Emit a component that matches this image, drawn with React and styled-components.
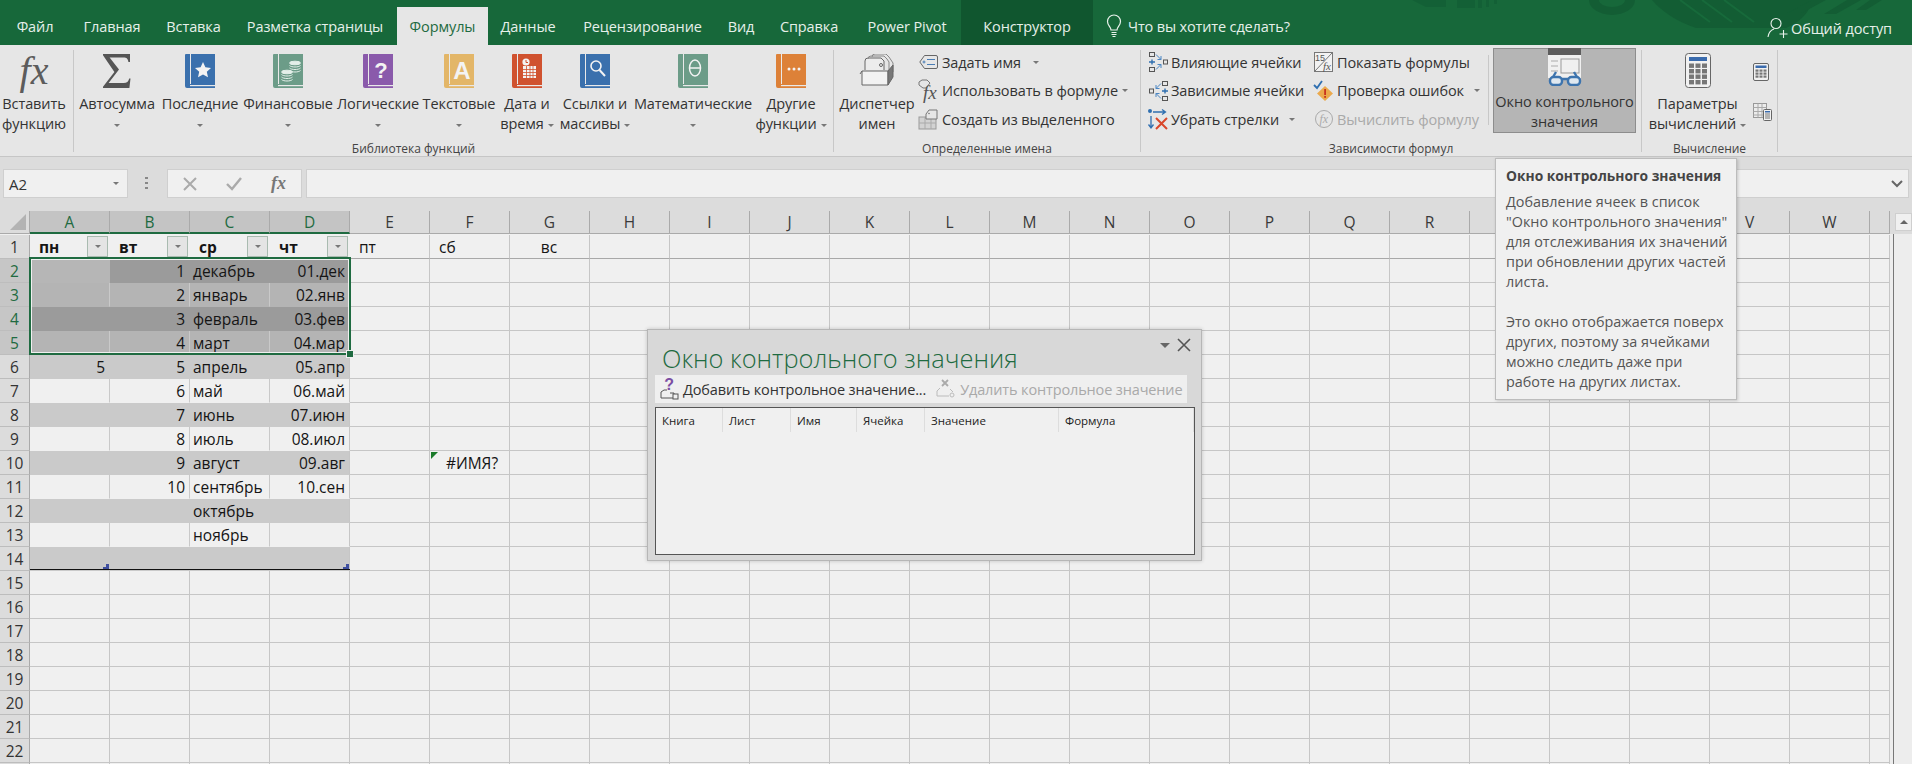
import styled, { createGlobalStyle } from "styled-components";

const GREEN = "#17683a";
const SEL_GREEN = "#1f6b41";
const FONT = `"Open Sans", "Noto Sans", sans-serif`;

const GlobalStyle = createGlobalStyle`
    html, body {
        margin: 0;
        padding: 0;
        overflow: hidden;
        background: #f0f0f0;
    }
    * { box-sizing: border-box; }
`;

const TABS = [
    { name: "Файл", width: 70 },
    { name: "Главная", width: 84 },
    { name: "Вставка", width: 79 },
    { name: "Разметка страницы", width: 164 },
    { name: "Формулы", width: 91, active: true },
    { name: "Данные", width: 80 },
    { name: "Рецензирование", width: 149 },
    { name: "Вид", width: 48 },
    { name: "Справка", width: 88 },
    { name: "Power Pivot", width: 108 },
    { name: "Конструктор", width: 132, dark: true },
];

const COLUMNS = "ABCDEFGHIJKLMNOPQRSTUVW".split("");
const UNDER_TOOLTIP = ["S", "T", "U"];

const TABLE_ROWS = [
    ["", "1", "декабрь", "01.дек"],
    ["", "2", "январь", "02.янв"],
    ["", "3", "февраль", "03.фев"],
    ["", "4", "март", "04.мар"],
    ["5", "5", "апрель", "05.апр"],
    ["", "6", "май", "06.май"],
    ["", "7", "июнь", "07.июн"],
    ["", "8", "июль", "08.июл"],
    ["", "9", "август", "09.авг"],
    ["", "10", "сентябрь", "10.сен"],
    ["", "", "октябрь", ""],
    ["", "", "ноябрь", ""],
    ["", "", "", ""],
];

const WATCH_COLUMNS = [
    { name: "Книга", width: 67 },
    { name: "Лист", width: 68 },
    { name: "Имя", width: 66 },
    { name: "Ячейка", width: 68 },
    { name: "Значение", width: 134 },
    { name: "Формула", width: 135 },
];

function toneOf(rowNo, colIdx) {
    if (rowNo === 2) return colIdx === 0 ? "#b6b6b6" : "#9b9b9b";
    if (rowNo === 3 || rowNo === 5) return "#b4b4b4";
    if (rowNo === 4) return "#9b9b9b";
    return rowNo % 2 === 0 ? "#cacaca" : "#f0f0f0";
}

/* ---- icons ---- */

function Book({ color, light, children }) {
    return (
        <svg width="30" height="34" viewBox="0 0 30 34">
            <path d="M1 0h29v31H6v1h24v2H2a2 2 0 0 1-2-2V1a1 1 0 0 1 1-1z" fill={color} />
            <rect x="5" y="0" width="1" height="30" fill={light || "#e9e9e9"} />
            <rect x="5" y="31" width="25" height="1.2" fill={light || "#e9e9e9"} />
            {children}
        </svg>
    );
}

const BookLetter = styled.text`
    font-family: "Liberation Sans", sans-serif;
    font-weight: 700;
    fill: #f3f3f3;
    text-anchor: middle;
`;

const Sigma = () => (
    <svg width="30" height="34" viewBox="0 0 30 34">
        <path d="M1 0h27v8h-1.6c-.5-3-1.6-4.4-5-4.4H7.6L17 15.6 6.6 29h15c3.400 0 4.800-1.600 5.600-4.600h1.300L27.400 34H1v-1.200L12.400 18 1 1.300z" fill="#555" />
    </svg>
);

const CoinStack = ({ x, y }) => (
    <g stroke="#e4efe9" strokeWidth="1" fill="none">
        <ellipse cx={x} cy={y} rx="5.500" ry="1.800" fill="#e4efe9" />
        <path d={`M${x - 5.5} ${y + 2.5}c2 2 9 2 11 0M${x - 5.5} ${y + 5}c2 2 9 2 11 0M${x - 5.5} ${y + 7.5}c2 2 9 2 11 0`} />
    </g>
);

const BulbIcon = () => (
    <svg width="16" height="24" viewBox="0 0 16 24" fill="none" stroke="#e9f2ec" strokeWidth="1.200">
        <path d="M5 16c0-3-3.500-4.500-3.500-8.500a6.500 6.500 0 0 1 13 0C14.500 11.500 11 13 11 16z" />
        <path d="M5.500 18.500h5M5.500 20.500h5M6.500 22.500h3" />
    </svg>
);

const ShareIcon = () => (
    <svg width="22" height="22" viewBox="0 0 22 22" fill="none" stroke="#e9f2ec" strokeWidth="1.100">
        <circle cx="9" cy="6.500" r="5" />
        <path d="M1 20c.6-4.500 3-7 6-8M16.500 13v8M12.500 17h8" />
    </svg>
);

const TagIcon = () => (
    <svg width="19" height="16" viewBox="0 0 19 16" fill="none" stroke="#666" strokeWidth="1">
        <path d="M5.500 1.500H17a1.500 1.500 0 0 1 1.500 1.500v10a1.500 1.500 0 0 1-1.500 1.500H5.500L.8 8z" />
        <circle cx="5" cy="8" r="1" stroke="#4a7db5" />
        <path d="M8 5.500h8M8 10.500h8" stroke="#4a7db5" />
    </svg>
);

const FxSvg = styled.text`
    font-family: "Liberation Serif", serif;
    font-style: italic;
    fill: #555;
`;

const UseFormulaIcon = () => (
    <svg width="21" height="24" viewBox="0 0 21 24">
        <path d="M1 3l3-2h5l3 3-4 5H5L1 6z" fill="none" stroke="#777" />
        <FxSvg x="5" y="20" fontSize="19">fx</FxSvg>
    </svg>
);

const CreateFromIcon = () => (
    <svg width="21" height="22" viewBox="0 0 21 22">
        <rect x="1" y="9" width="17" height="12" fill="#d2d2d2" stroke="#999" />
        <path d="M1 15h17M7 9v12M13 9v12" stroke="#aaa" />
        <path d="M8 6l3-4h8v9H8z" fill="#e6e6e6" stroke="#777" />
        <circle cx="11" cy="5.500" r=".8" fill="#777" />
    </svg>
);

const NameManagerIcon = () => (
    <svg width="36" height="34" viewBox="0 0 36 34" fill="none" stroke="#666">
        <path d="M6 16V7a3 3 0 0 1 3-3h13l3 3v9" fill="#ececec" />
        <path d="M9 5a3 3 0 0 1 3-3h13l3 3 2 3v9M13 3a3 3 0 0 1 3-3h11l3 3 2 3 2 3v9" stroke="#888" />
        <circle cx="22" cy="11" r="1.500" />
        <path d="M3 17h26v14H3z" fill="#f2f2f2" />
        <path d="M3 17l-2 3M29 17l5-6v12l-5 8z" fill="#777" stroke="#666" />
    </svg>
);

const TraceIcon = ({ flip }) => (
    <svg width="21" height="20" viewBox="0 0 21 20" fill="none" stroke="#555" style={flip ? { transform: "scaleX(-1)" } : undefined}>
        <rect x="1.500" y=".5" width="5" height="4" />
        <rect x="1.500" y="15.500" width="5" height="4" />
        <rect x="15.500" y="8" width="4" height="4" />
        <path d="M1 10h6M4 7.500v5" stroke="#2f6fb0" strokeWidth="1.400" />
        <path d="M8 2.500l5 5M13 4v3.500H9.500M8 17.500l5-5M13 16v-3.500H9.500" stroke="#4a86c4" />
    </svg>
);

const RemoveArrowsIcon = () => (
    <svg width="22" height="22" viewBox="0 0 22 22" fill="none">
        <circle cx="3" cy="3" r="2" fill="#2f6fb0" />
        <path d="M6 4h12M15 1.500L18.500 4 15 6.500M4 8v12M1.500 16.500L4 20l2.500-3.500" stroke="#2f6fb0" strokeWidth="1.300" />
        <path d="M9 10l11 11M20 10L9 21" stroke="#d9472b" strokeWidth="2" />
    </svg>
);

const MiniText = styled.text`
    font-family: "Liberation Sans", sans-serif;
    fill: #555;
`;

const ShowFormulasIcon = () => (
    <svg width="20" height="21" viewBox="0 0 20 21">
        <rect x=".5" y=".5" width="18" height="19" fill="#f2f2f2" stroke="#777" />
        <path d="M1 19L18 1" stroke="#777" />
        <MiniText x="1" y="9" fontSize="9">15</MiniText>
        <FxSvg x="9" y="18" fontSize="11">fx</FxSvg>
    </svg>
);

const ErrorCheckIcon = () => (
    <svg width="22" height="21" viewBox="0 0 22 21">
        <path d="M1 5l3 3 5-7" fill="none" stroke="#2f6fb0" strokeWidth="1.800" />
        <path d="M12 6l8 7.500-8 7.500-8-7.500z" fill="#eba94c" />
        <rect x="11.200" y="9" width="1.800" height="6" fill="#c8321f" />
        <rect x="11.200" y="16" width="1.800" height="1.800" fill="#c8321f" />
    </svg>
);

const GrayFx = styled(FxSvg)`
    fill: #aaa;
`;

const EvaluateIcon = () => (
    <svg width="20" height="20" viewBox="0 0 20 20">
        <circle cx="10" cy="10" r="8.500" fill="none" stroke="#aaa" />
        <GrayFx x="5.500" y="14" fontSize="12">fx</GrayFx>
    </svg>
);

const WatchIcon = () => (
    <svg width="36" height="38" viewBox="0 0 36 38">
        <rect x="1" y="0" width="33" height="30" fill="#f0f0f0" />
        <rect x="1" y="0" width="33" height="7" fill="#5c5c5c" />
        <rect x="14" y="11" width="18" height="14" fill="none" stroke="#999" />
        <path d="M4 13h7M4 18h7M4 23h7" stroke="#aaa" />
        <g fill="#dfe8f0" stroke="#3d74ae" strokeWidth="2.400">
            <rect x="3" y="29" width="12" height="8" rx="3.500" />
            <rect x="21" y="29" width="12" height="8" rx="3.500" />
            <path d="M15 31h6M6 29l3-5M30 29l-3-5" fill="none" />
        </g>
    </svg>
);

const CalcLargeIcon = () => (
    <svg width="26" height="35" viewBox="0 0 26 35">
        <rect x=".5" y=".5" width="25" height="34" rx="3" fill="#f1f1f1" stroke="#666" />
        <rect x="4" y="4" width="18" height="4" fill="#3a6bad" />
        <g fill="#777">
            {[10.5, 16, 21.5, 27].map((y) => [4, 10.5, 17].map((x) => <rect key={`${x}-${y}`} x={x} y={y} width="5" height="4.400" />))}
        </g>
    </svg>
);

const CalcSmallIcon = () => (
    <svg width="16" height="18" viewBox="0 0 16 18">
        <rect x=".5" y=".5" width="15" height="17" rx="1.500" fill="#f1f1f1" stroke="#666" />
        <rect x="2.500" y="2.500" width="11" height="2.500" fill="#3a6bad" />
        <g fill="#777">
            {[6.5, 9.5, 12.5].map((y) => [2.5, 6.5, 10.5].map((x) => <rect key={`${x}-${y}`} x={x} y={y} width="3" height="2.200" />))}
        </g>
    </svg>
);

const CalcSheetIcon = () => (
    <svg width="19" height="18" viewBox="0 0 19 18">
        <rect x=".5" y=".5" width="13" height="14" fill="#ececec" stroke="#999" />
        <path d="M.5 4.500h13M.5 8.500h13M.5 12h13M5 .5v14M9 .5v14" stroke="#aaa" />
        <rect x="10.500" y="6.500" width="8" height="11" rx="1" fill="#f1f1f1" stroke="#666" />
        <rect x="12" y="8" width="5" height="1.500" fill="#3a6bad" />
        <path d="M12 11h5M12 13h5M12 15h5" stroke="#777" />
    </svg>
);

const PurpleMark = styled(BookLetter)`
    fill: #7b4ea3;
`;

const AddWatchIcon = () => (
    <svg width="20" height="24" viewBox="0 0 20 24">
        <PurpleMark x="9" y="13" fontSize="16">?</PurpleMark>
        <path d="M1 21v-6l3-2h3M10 16h4v5H1" fill="none" stroke="#555" />
        <rect x="13" y="17" width="5" height="5" fill="#f0f0f0" stroke="#555" />
    </svg>
);

const RemoveWatchIcon = () => (
    <svg width="20" height="20" viewBox="0 0 20 20">
        <path d="M6 1l6 6M12 1L6 7" stroke="#aaa" strokeWidth="1.800" />
        <path d="M1 17v-5l3-3M14 10l3 3M1 17h12" fill="none" stroke="#bbb" />
        <circle cx="16" cy="16" r="2" fill="none" stroke="#bbb" />
    </svg>
);

const BigFx = styled.div`
    font-family: "Liberation Serif", serif;
    font-style: italic;
    font-size: 40px;
    line-height: 34px;
    color: #5c5c5c;
    height: 34px;
`;

/* ---- title bar ---- */

const Page = styled.div`
    position: relative;
    width: 1912px;
    height: 764px;
    overflow: hidden;
    font-family: ${FONT};
    background: #f0f0f0;
`;

const TitleBar = styled.div`
    position: relative;
    display: flex;
    align-items: flex-end;
    height: 45px;
    background: ${GREEN};
`;

const Decor = styled.svg`
    position: absolute;
    right: 0;
    top: 0;
    pointer-events: none;
`;

const Tab = styled.div`
    position: relative;
    display: flex;
    align-items: center;
    justify-content: center;
    flex: none;
    height: ${(p) => (p.$active ? "38px" : "45px")};
    padding-top: ${(p) => (p.$active ? "0" : "7px")};
    width: ${(p) => p.$width}px;
    font-size: 14.5px;
    letter-spacing: -0.1px;
    color: ${(p) => (p.$active ? SEL_GREEN : "#e6f0ea")};
    background: ${(p) => (p.$active ? "#e6e6e6" : p.$dark ? "#10562f" : "transparent")};
`;

const TellMe = styled.div`
    position: relative;
    display: flex;
    align-items: center;
    gap: 6px;
    height: 45px;
    padding: 7px 0 0 13px;
    font-size: 14.5px;
    letter-spacing: -0.15px;
    color: #e6f0ea;
`;

const Share = styled.div`
    position: relative;
    display: flex;
    align-items: center;
    gap: 2px;
    height: 45px;
    padding-top: 11px;
    margin-left: auto;
    margin-right: 20px;
    font-size: 14.5px;
    letter-spacing: -0.1px;
    color: #e6f0ea;
`;

/* ---- ribbon ---- */

const Ribbon = styled.div`
    display: flex;
    height: 112px;
    background: #e6e6e6;
    border-bottom: 1px solid #c6c6c6;
`;

const Group = styled.div`
    display: flex;
    flex-direction: column;
    flex: none;
    width: ${(p) => p.$width}px;
    height: 102px;
    margin-top: 5px;
    border-right: ${(p) => (p.$noLine ? "0" : "1px solid #c8c8c8")};
`;

const GroupBody = styled.div`
    display: flex;
    flex: none;
    height: 92px;
    padding-left: ${(p) => p.$left || 0}px;
`;

const GroupLabel = styled.div`
    flex: none;
    height: 14px;
    padding-right: ${(p) => p.$shift || 0}px;
    line-height: 14px;
    text-align: center;
    font-size: 12px;
    color: #444;
    white-space: nowrap;
`;

const LargeButton = styled.div`
    display: flex;
    flex-direction: column;
    align-items: center;
    flex: none;
    width: ${(p) => p.$width}px;
    padding-top: 4px;
`;

const IconSlot = styled.div`
    display: flex;
    justify-content: center;
    align-items: flex-end;
    height: 34px;
`;

const ButtonText = styled.div`
    margin-top: 6px;
    font-size: 14.5px;
    line-height: 20px;
    letter-spacing: -0.1px;
    text-align: center;
    white-space: nowrap;
    color: #333;
`;

const Caret = styled.span`
    display: inline-block;
    width: 0;
    height: 0;
    margin-left: ${(p) => p.$gap ?? 4}px;
    vertical-align: middle;
    border-left: ${(p) => p.$size ?? 3.5}px solid transparent;
    border-right: ${(p) => p.$size ?? 3.5}px solid transparent;
    border-top: ${(p) => p.$size ?? 3.5}px solid ${(p) => p.$color || "#777"};
`;

const SmallColumn = styled.div`
    display: flex;
    flex-direction: column;
    gap: 4.5px;
    flex: none;
    width: ${(p) => p.$width}px;
`;

const SmallButton = styled.div`
    display: flex;
    align-items: center;
    height: 24px;
    font-size: 14.5px;
    letter-spacing: -0.1px;
    white-space: nowrap;
    color: ${(p) => (p.$disabled ? "#a9a9a9" : "#333")};
`;

const SmallIcon = styled.span`
    display: flex;
    justify-content: center;
    flex: none;
    width: ${(p) => p.$width || 22}px;
    margin-right: 2px;
`;

const InnerLine = styled.div`
    flex: none;
    width: 1px;
    height: 70px;
    margin: 5px 4px 0 0;
    background: #c8c8c8;
`;

const PressedButton = styled(LargeButton)`
    height: 85px;
    margin-top: -2px;
    padding-top: 3px;
    background: #b5b5b5;
    border: 1px solid #8d8d8d;
`;

const CalcSide = styled.div`
    display: flex;
    flex-direction: column;
    gap: 22px;
    padding: 13px 0 0 3px;
`;

const CollapseSlot = styled.div`
    display: flex;
    align-items: flex-end;
    justify-content: center;
    flex: 1;
    padding-bottom: 7px;
`;

/* ---- formula bar ---- */

const FormulaArea = styled.div`
    display: flex;
    align-items: flex-start;
    height: 54px;
    padding: 12px 3px 0;
    background: #dcdcdc;
`;

const NameBox = styled.div`
    display: flex;
    align-items: center;
    justify-content: space-between;
    flex: none;
    width: 125px;
    height: 29px;
    padding: 0 8px 0 5px;
    font-size: 15px;
    color: #333;
    background: #f0f0f0;
    border: 1px solid #cfcfcf;
`;

const GripDots = styled.div`
    flex: none;
    width: 3px;
    height: 13px;
    margin: 8px 19px 0 17px;
    background: repeating-linear-gradient(to bottom, #888 0 2px, transparent 2px 5px);
`;

const FuncBox = styled.div`
    display: flex;
    align-items: center;
    gap: 29px;
    flex: none;
    width: 135px;
    height: 29px;
    padding: 0 0 0 15px;
    background: #f0f0f0;
    border: 1px solid #cfcfcf;
`;

const FuncFx = styled.span`
    font-family: "Liberation Serif", serif;
    font-style: italic;
    font-weight: 700;
    font-size: 18px;
    color: #777;
`;

const FormulaInput = styled.div`
    display: flex;
    align-items: center;
    justify-content: flex-end;
    flex: none;
    width: 1603px;
    height: 29px;
    margin-left: 4px;
    padding-right: 5px;
    background: #f0f0f0;
    border: 1px solid #cfcfcf;
`;

/* ---- sheet ---- */

const SheetArea = styled.div`
    display: flex;
    height: 553px;
    overflow: hidden;
`;

const Sheet = styled.div`
    position: relative;
    display: grid;
    flex: none;
    grid-template-columns: 30px repeat(23, 80px) 20px;
    grid-auto-rows: 24px;
    align-content: start;
    width: 1890px;
    background: #f0f0f0;
`;

const Corner = styled.div`
    display: flex;
    align-items: flex-end;
    justify-content: flex-end;
    height: 23px;
    padding: 0 3px 3px 0;
    background: #dcdcdc;
    border-right: 1px solid #aaa;
    border-bottom: 1px solid #aaa;
`;

const ColHeader = styled.div`
    display: flex;
    align-items: center;
    justify-content: center;
    height: 23px;
    font-size: 15.5px;
    color: ${(p) => (p.$sel ? SEL_GREEN : "#3a3a3a")};
    background: ${(p) => (p.$sel ? "#c4c4c4" : "#dcdcdc")};
    border-right: 1px solid #aaa;
    border-bottom: ${(p) => (p.$sel ? `2px solid ${SEL_GREEN}` : "1px solid #aaa")};
`;

const RowHeader = styled.div`
    display: flex;
    align-items: center;
    justify-content: center;
    font-size: 15.5px;
    color: ${(p) => (p.$sel ? SEL_GREEN : "#333")};
    background: ${(p) => (p.$sel ? "#c6c6c6" : "#dcdcdc")};
    border-right: 1px solid ${(p) => (p.$sel ? SEL_GREEN : "#aaa")};
    border-bottom: 1px solid #bdbdbd;
`;

const Cell = styled.div`
    position: relative;
    display: flex;
    align-items: center;
    justify-content: ${(p) => p.$justify || "flex-start"};
    padding: 0 ${(p) => p.$padRight ?? 4}px 0 ${(p) => p.$padLeft ?? 3}px;
    min-width: 0;
    font-size: 15.5px;
    font-weight: ${(p) => (p.$bold ? 700 : 400)};
    white-space: nowrap;
    color: #151515;
    background: ${(p) => p.$tone || "#f0f0f0"};
    border-right: 1px solid ${(p) => p.$vline || "transparent"};
    border-bottom: 1px solid ${(p) => p.$hline || "transparent"};
`;

const FilterButton = styled.div`
    display: flex;
    align-items: center;
    justify-content: center;
    flex: none;
    width: 21px;
    height: 21px;
    background: #e4e4e4;
    border: 1px solid #a9bbb0;
`;

const ErrorMark = styled.span`
    position: absolute;
    left: 1px;
    top: 1px;
    width: 0;
    height: 0;
    border-top: 7px solid #1a7a2a;
    border-right: 7px solid transparent;
`;

const ResizeMark = styled.span`
    position: absolute;
    right: 0;
    bottom: 0;
    width: 6px;
    height: 6px;
    background: #3f4f9f;
    clip-path: polygon(100% 0, 100% 100%, 0 100%, 0 50%, 50% 50%, 50% 0);
`;

const Selection = styled.div`
    position: absolute;
    left: 29px;
    top: 46px;
    width: 322px;
    height: 98px;
    border: 2px solid ${SEL_GREEN};
    box-shadow: inset 0 0 0 1px #f0f0f0;
    pointer-events: none;
`;

const FillHandle = styled.span`
    position: absolute;
    right: -4px;
    bottom: -4px;
    width: 6px;
    height: 6px;
    background: ${SEL_GREEN};
    outline: 1px solid #f0f0f0;
`;

const TableEnd = styled.div`
    position: absolute;
    left: 30px;
    top: 358px;
    width: 320px;
    height: 1px;
    background: #111;
`;

const Scrollbar = styled.div`
    flex: none;
    width: 22px;
    padding-left: 3px;
    background: linear-gradient(to bottom, #dcdcdc 23px, #ededed 23px);
`;

const ScrollTrack = styled.div`
    height: 100%;
    padding: 2px 0 0 2px;
    background: linear-gradient(to bottom, transparent 23px, #777 23px) left / 1px 100% no-repeat;
`;

const ScrollUp = styled.div`
    display: flex;
    align-items: center;
    justify-content: center;
    height: 18px;
    background: #f0f0f0;
    border: 1px solid #cfcfcf;
`;

const UpTriangle = styled.span`
    width: 0;
    height: 0;
    border-left: 4px solid transparent;
    border-right: 4px solid transparent;
    border-bottom: 4px solid #666;
`;

/* ---- watch window ---- */

const WatchWindow = styled.div`
    position: absolute;
    left: 647px;
    top: 329px;
    display: flex;
    flex-direction: column;
    width: 555px;
    height: 232px;
    padding: 0 7px;
    background: #d8d8d8;
    border: 1px solid #b6b6b6;
    box-shadow: 0 0 4px rgba(0, 0, 0, 0.2);
`;

const WatchTop = styled.div`
    display: flex;
    align-items: flex-start;
    justify-content: space-between;
    height: 45px;
`;

const WatchTitle = styled.div`
    margin: 10px 0 0 7px;
    font-size: 25.4px;
    font-weight: 300;
    line-height: 36px;
    color: ${SEL_GREEN};
    white-space: nowrap;
`;

const WatchControls = styled.div`
    display: flex;
    align-items: center;
    gap: 7px;
    margin: 8px 3px 0 0;
`;

const WatchToolbar = styled.div`
    display: flex;
    align-items: center;
    gap: 3px;
    width: 532px;
    height: 28px;
    padding-left: 5px;
    font-size: 14.5px;
    letter-spacing: -0.14px;
    white-space: nowrap;
    color: #333;
    background: #efefef;
`;

const ToolbarGhost = styled.span`
    display: flex;
    align-items: center;
    gap: 4px;
    margin-left: 7px;
    color: #a9a9a9;
`;

const WatchList = styled.div`
    display: flex;
    align-items: flex-start;
    width: 540px;
    height: 148px;
    margin-top: 4px;
    background: #f0f0f0;
    border: 1px solid #555;
`;

const WatchColumn = styled.div`
    flex: none;
    width: ${(p) => p.$width}px;
    height: 24px;
    padding: 5px 0 0 6px;
    font-size: 11.5px;
    line-height: 16px;
    color: #222;
    border-right: 1px solid #ddd;
`;

/* ---- tooltip ---- */

const Tooltip = styled.div`
    position: absolute;
    left: 1495px;
    top: 158px;
    width: 242px;
    height: 242px;
    padding: 7px 6px 0 10px;
    background: #f0f0f0;
    border: 1px solid #bcbcbc;
    box-shadow: 1px 1px 3px rgba(0, 0, 0, 0.18);
    color: #555;
`;

const TipTitle = styled.div`
    font-size: 13.8px;
    font-weight: 700;
    line-height: 20px;
    color: #444;
    white-space: nowrap;
`;

const TipText = styled.p`
    margin: 6px 0 20px;
    font-size: 14.4px;
    line-height: 20px;
    white-space: pre-line;
`;

function Tabs() {
    return (
        <TitleBar>
            <Decor width="510" height="45" viewBox="0 0 510 45" fill="#135d34">
                <path d="M10 0l14 7h20V0zM55 0h18v8H55zM76 0h4v8h-4zM84 0h3v7h-3zM92 0h3v4h-3z" opacity=".7" />
                <path d="M187 0a23 15 0 0 0 46 0h-10a13 7 0 0 1-26 0z" />
                <path d="M250 0c10 12 26 22 44 28h90c18-8 24-18 26-28z" />
                <path d="M410 0h14l-26 14-14 0zM445 0h14l-25 14h-12zM468 0h12l-16 10h-10z" />
                <path d="M278 0l30 22M300 0l30 22M322 0l30 22" stroke="#176a3b" strokeWidth="2" fill="none" />
            </Decor>
            {TABS.map((t) => (
                <Tab key={t.name} $width={t.width} $active={t.active} $dark={t.dark}>{t.name}</Tab>
            ))}
            <TellMe><BulbIcon />Что вы хотите сделать?</TellMe>
            <Share><ShareIcon />Общий доступ</Share>
        </TitleBar>
    );
}

function RibbonBar() {
    return (
        <Ribbon>
            <Group $width={74}>
                <GroupBody>
                    <LargeButton $width={68}>
                        <BigFx>fx</BigFx>
                        <ButtonText>Вставить<br />функцию</ButtonText>
                    </LargeButton>
                </GroupBody>
            </Group>
            <Group $width={760}>
                <GroupBody $left={4}>
                    <LargeButton $width={78}>
                        <IconSlot><Sigma /></IconSlot>
                        <ButtonText>Автосумма<br /><Caret $gap={0} /></ButtonText>
                    </LargeButton>
                    <LargeButton $width={88}>
                        <IconSlot>
                            <Book color="#3a70ad">
                                <path d="M18 8l2.400 5.300 5.600.6-4.200 3.800 1.200 5.600-5-2.900-5 2.900 1.200-5.600L10 13.900l5.600-.6z" fill="#f3f3f3" />
                            </Book>
                        </IconSlot>
                        <ButtonText>Последние<br /><Caret $gap={0} /></ButtonText>
                    </LargeButton>
                    <LargeButton $width={88}>
                        <IconSlot>
                            <Book color="#6c9c88">
                                <CoinStack x={22} y={9} />
                                <CoinStack x={14} y={18} />
                            </Book>
                        </IconSlot>
                        <ButtonText>Финансовые<br /><Caret $gap={0} /></ButtonText>
                    </LargeButton>
                    <LargeButton $width={92}>
                        <IconSlot>
                            <Book color="#8a5aab">
                                <BookLetter x="18" y="24" fontSize="22">?</BookLetter>
                            </Book>
                        </IconSlot>
                        <ButtonText>Логические<br /><Caret $gap={0} /></ButtonText>
                    </LargeButton>
                    <LargeButton $width={70}>
                        <IconSlot>
                            <Book color="#e3b668">
                                <BookLetter x="18" y="25" fontSize="24">A</BookLetter>
                            </Book>
                        </IconSlot>
                        <ButtonText>Текстовые<br /><Caret $gap={0} /></ButtonText>
                    </LargeButton>
                    <LargeButton $width={66}>
                        <IconSlot>
                            <Book color="#d0522f">
                                <circle cx="14" cy="8" r="3.600" fill="#f3f3f3" />
                                <path d="M14 6v2.500h2" stroke="#d0522f" fill="none" />
                                <rect x="11" y="12" width="13" height="12" fill="#f3f3f3" />
                                <path d="M11 15.500h13M11 18.500h13M11 21.500h13M14.500 12v12M18 12v12M21 12v12" stroke="#d0522f" strokeWidth=".8" />
                            </Book>
                        </IconSlot>
                        <ButtonText>Дата и<br />время<Caret /></ButtonText>
                    </LargeButton>
                    <LargeButton $width={70}>
                        <IconSlot>
                            <Book color="#3a70ad">
                                <circle cx="16" cy="12" r="5" fill="none" stroke="#f3f3f3" strokeWidth="1.600" />
                                <path d="M19.500 16l5.500 6" stroke="#f3f3f3" strokeWidth="2" />
                            </Book>
                        </IconSlot>
                        <ButtonText>Ссылки и<br />массивы<Caret /></ButtonText>
                    </LargeButton>
                    <LargeButton $width={126}>
                        <IconSlot>
                            <Book color="#6c9c88">
                                <ellipse cx="17" cy="14" rx="5.500" ry="8" fill="none" stroke="#f3f3f3" strokeWidth="1.500" />
                                <path d="M11.500 14h11" stroke="#f3f3f3" strokeWidth="1.500" />
                            </Book>
                        </IconSlot>
                        <ButtonText>Математические<br /><Caret $gap={0} /></ButtonText>
                    </LargeButton>
                    <LargeButton $width={70}>
                        <IconSlot>
                            <Book color="#dd8138">
                                <circle cx="13" cy="15" r="1.500" fill="#f3f3f3" />
                                <circle cx="18" cy="15" r="1.500" fill="#f3f3f3" />
                                <circle cx="23" cy="15" r="1.500" fill="#f3f3f3" />
                            </Book>
                        </IconSlot>
                        <ButtonText>Другие<br />функции<Caret /></ButtonText>
                    </LargeButton>
                </GroupBody>
                <GroupLabel $shift={80}>Библиотека функций</GroupLabel>
            </Group>
            <Group $width={307}>
                <GroupBody $left={4}>
                    <LargeButton $width={78}>
                        <IconSlot><NameManagerIcon /></IconSlot>
                        <ButtonText>Диспетчер<br />имен</ButtonText>
                    </LargeButton>
                    <SmallColumn $width={210}>
                        <SmallButton><SmallIcon $width={24}><TagIcon /></SmallIcon>Задать имя<Caret $gap={12} /></SmallButton>
                        <SmallButton><SmallIcon $width={24}><UseFormulaIcon /></SmallIcon>Использовать в формуле<Caret /></SmallButton>
                        <SmallButton><SmallIcon $width={24}><CreateFromIcon /></SmallIcon>Создать из выделенного</SmallButton>
                    </SmallColumn>
                </GroupBody>
                <GroupLabel>Определенные имена</GroupLabel>
            </Group>
            <Group $width={501}>
                <GroupBody $left={6}>
                    <SmallColumn $width={166}>
                        <SmallButton><SmallIcon><TraceIcon /></SmallIcon>Влияющие ячейки</SmallButton>
                        <SmallButton><SmallIcon><TraceIcon flip /></SmallIcon>Зависимые ячейки</SmallButton>
                        <SmallButton><SmallIcon><RemoveArrowsIcon /></SmallIcon>Убрать стрелки<Caret $gap={10} /></SmallButton>
                    </SmallColumn>
                    <SmallColumn $width={175}>
                        <SmallButton><SmallIcon><ShowFormulasIcon /></SmallIcon>Показать формулы</SmallButton>
                        <SmallButton><SmallIcon><ErrorCheckIcon /></SmallIcon>Проверка ошибок<Caret $gap={10} /></SmallButton>
                        <SmallButton $disabled><SmallIcon><EvaluateIcon /></SmallIcon>Вычислить формулу</SmallButton>
                    </SmallColumn>
                    <InnerLine />
                    <PressedButton $width={143}>
                        <IconSlot><WatchIcon /></IconSlot>
                        <ButtonText>Окно контрольного<br />значения</ButtonText>
                    </PressedButton>
                </GroupBody>
                <GroupLabel>Зависимости формул</GroupLabel>
            </Group>
            <Group $width={136}>
                <GroupBody $left={3}>
                    <LargeButton $width={105}>
                        <IconSlot><CalcLargeIcon /></IconSlot>
                        <ButtonText>Параметры<br />вычислений<Caret /></ButtonText>
                    </LargeButton>
                    <CalcSide>
                        <CalcSmallIcon />
                        <CalcSheetIcon />
                    </CalcSide>
                </GroupBody>
                <GroupLabel>Вычисление</GroupLabel>
            </Group>
            <CollapseSlot>
                <svg width="214" height="8" viewBox="0 0 214 8" fill="none" stroke="#555" strokeWidth="1.400" preserveAspectRatio="xMaxYMid meet">
                    <path d="M199 7l5-5 5 5" />
                </svg>
            </CollapseSlot>
        </Ribbon>
    );
}

function FormulaBar() {
    return (
        <FormulaArea>
            <NameBox>A2<Caret /></NameBox>
            <GripDots />
            <FuncBox>
                <svg width="14" height="14" viewBox="0 0 14 14" stroke="#aaa" strokeWidth="2"><path d="M1 1l12 12M13 1L1 13" /></svg>
                <svg width="16" height="14" viewBox="0 0 16 14" stroke="#aaa" strokeWidth="2.400" fill="none"><path d="M1 7l5 5L15 1" /></svg>
                <FuncFx>fx</FuncFx>
            </FuncBox>
            <FormulaInput>
                <svg width="12" height="8" viewBox="0 0 12 8" stroke="#666" strokeWidth="2" fill="none"><path d="M1 1l5 5 5-5" /></svg>
            </FormulaInput>
        </FormulaArea>
    );
}

function TableCell({ rowNo, col, value }) {
    const tone = toneOf(rowNo, col);
    const odd = rowNo % 2 === 1;
    const vline = odd && col < 3 ? "#c9c9c9" : col === 3 ? "#c6c6c6" : undefined;
    return (
        <Cell
            $tone={tone}
            $vline={vline}
            $justify={col === 1 || col === 3 || col === 0 ? "flex-end" : "flex-start"}
        >
            {value}
            {rowNo === 14 && (col === 0 || col === 3) ? <ResizeMark /> : null}
        </Cell>
    );
}

function SheetRows() {
    const rows = [];
    for (let rowNo = 2; rowNo <= 23; rowNo++) {
        const data = TABLE_ROWS[rowNo - 2];
        const sel = rowNo <= 5;
        rows.push(<RowHeader key={`h${rowNo}`} $sel={sel}>{rowNo < 23 ? rowNo : null}</RowHeader>);
        for (let c = 0; c < 4; c++) {
            rows.push(
                data
                    ? <TableCell key={`${rowNo}-${c}`} rowNo={rowNo} col={c} value={data[c]} />
                    : <Cell key={`${rowNo}-${c}`} $vline="#c6c6c6" $hline="#c6c6c6" />
            );
        }
        for (let c = 4; c < 24; c++) {
            const isError = rowNo === 10 && c === 5;
            rows.push(
                <Cell key={`${rowNo}-${c}`} $vline="#c6c6c6" $hline="#c6c6c6" $justify={isError ? "center" : undefined} $padLeft={isError ? 9 : 4}>
                    {isError ? <ErrorMark /> : null}
                    {isError ? "#ИМЯ?" : null}
                </Cell>
            );
        }
    }
    return rows;
}

function SheetGrid() {
    const top = ["пн", "вт", "ср", "чт"];
    return (
        <SheetArea>
            <Sheet>
                <Corner>
                    <svg width="16" height="16" viewBox="0 0 16 16"><path d="M16 0v16H0z" fill="#b3b3b3" /></svg>
                </Corner>
                {COLUMNS.map((c, i) => (
                    <ColHeader key={c} $sel={i < 4}>{UNDER_TOOLTIP.includes(c) ? null : c}</ColHeader>
                ))}
                <ColHeader />

                <RowHeader>1</RowHeader>
                {top.map((t) => (
                    <Cell key={t} $bold $padLeft={9} $padRight={1} $justify="space-between" $hline="#a8a8a8">
                        {t}
                        <FilterButton><Caret $gap={0} /></FilterButton>
                    </Cell>
                ))}
                <Cell $padLeft={9} $vline="#c6c6c6" $hline="#a8a8a8">пт</Cell>
                <Cell $padLeft={9} $vline="#c6c6c6" $hline="#a8a8a8">сб</Cell>
                <Cell $justify="center" $vline="#c6c6c6" $hline="#a8a8a8">вс</Cell>
                {Array.from({ length: 17 }).map((_, i) => <Cell key={i} $vline="#c6c6c6" $hline="#a8a8a8" />)}

                <SheetRows />

                <Selection><FillHandle /></Selection>
                <TableEnd />
            </Sheet>
            <Scrollbar>
                <ScrollTrack>
                    <ScrollUp><UpTriangle /></ScrollUp>
                </ScrollTrack>
            </Scrollbar>
        </SheetArea>
    );
}

function Watch() {
    return (
        <WatchWindow>
            <WatchTop>
                <WatchTitle>Окно контрольного значения</WatchTitle>
                <WatchControls>
                    <Caret $gap={0} $size={5.5} $color="#666" />
                    <svg width="14" height="14" viewBox="0 0 14 14" stroke="#555" strokeWidth="1.600"><path d="M1 1l12 12M13 1L1 13" /></svg>
                </WatchControls>
            </WatchTop>
            <WatchToolbar>
                <AddWatchIcon />
                Добавить контрольное значение...
                <ToolbarGhost><RemoveWatchIcon />Удалить контрольное значение</ToolbarGhost>
            </WatchToolbar>
            <WatchList>
                {WATCH_COLUMNS.map((c) => <WatchColumn key={c.name} $width={c.width}>{c.name}</WatchColumn>)}
            </WatchList>
        </WatchWindow>
    );
}

export default function App() {
    return (
        <Page>
            <GlobalStyle />
            <Tabs />
            <RibbonBar />
            <FormulaBar />
            <SheetGrid />
            <Watch />
            <Tooltip>
                <TipTitle>Окно контрольного значения</TipTitle>
                <TipText>{'Добавление ячеек в список\n"Окно контрольного значения"\nдля отслеживания их значений\nпри обновлении других частей\nлиста.'}</TipText>
                <TipText>{'Это окно отображается поверх\nдругих, поэтому за ячейками\nможно следить даже при\nработе на других листах.'}</TipText>
            </Tooltip>
        </Page>
    );
}
